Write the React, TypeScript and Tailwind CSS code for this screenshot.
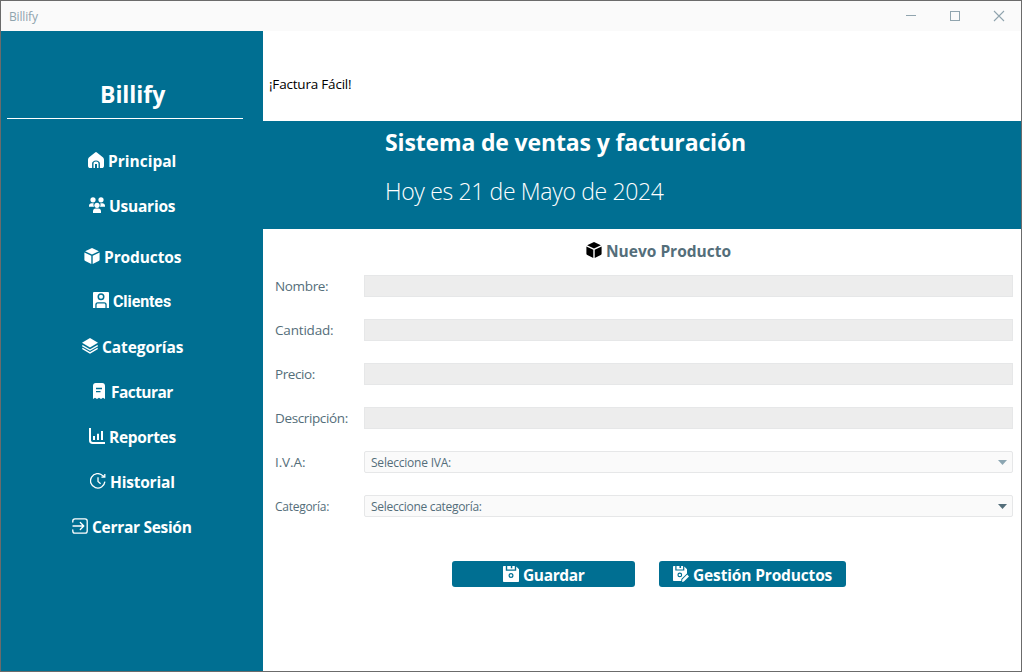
import React from 'react';

type IconProps = { className?: string };

function Svg({ className = '', children }: IconProps & { children: React.ReactNode }) {
  return (
    <svg width="16" height="16" viewBox="0 0 16 16" fill="none" className={`shrink-0 ${className}`}>
      {children}
    </svg>
  );
}

const HomeIcon = () => (
  <Svg>
    <path
      fill="currentColor"
      d="M7.1.4a1.5 1.5 0 0 1 1.8 0l5.6 4.7c.9.7 1.5 1.8 1.5 3v5.6c0 1.5-.9 2.3-2.2 2.3h-1.900v-4.5C11.900 9.700 10.300 8.400 8 8.400s-3.900 1.300-3.900 3.100V16H2.200C.9 16 0 15.200 0 13.700V8.100c0-1.200.6-2.300 1.500-3z"
    />
    <path fill="currentColor" d="M5.500 16v-4.200c0-1.300 1-2.200 2.500-2.200s2.500.9 2.500 2.200V16H9v-4H7v4z" />
  </Svg>
);

const UsersIcon = () => (
  <Svg>
    <g fill="currentColor">
      <circle cx="4" cy="2.800" r="2.600" />
      <circle cx="12" cy="2.800" r="2.600" />
      <circle cx="8" cy="8.300" r="2.600" />
      <path d="M2.600 6.200h2.100a4 4 0 0 0 .3 3.500H0v-1c0-1.400 1.100-2.500 2.600-2.500zM11.300 6.200h2.100c1.500 0 2.600 1.100 2.600 2.500v1h-5a4 4 0 0 0 .3-3.500zM6.500 11.500h3c1.500 0 2.500 1.200 2.500 2.700V16H4v-1.800c0-1.500 1-2.700 2.500-2.700z" />
    </g>
  </Svg>
);

const BoxIcon = ({ className }: IconProps) => (
  <Svg className={className}>
    <path
      fill="currentColor"
      d="M8 0l6.900 3.300L8 6.500 1.100 3.300zM.4 4.600l6.900 3.200V16L1.300 13C.7 12.700.4 12.300.4 11.700zM15.600 4.600v7.100c0 .6-.3 1-.9 1.300l-6 3V7.800z"
    />
  </Svg>
);

const ClientIcon = () => (
  <Svg>
    <path
      fill="currentColor"
      fillRule="evenodd"
      d="M1 0h14a1 1 0 0 1 1 1v15h-2.300v-3.300c0-1.500-.9-2.500-2.400-2.500H4.700c-1.500 0-2.400 1-2.400 2.500V16H0V1a1 1 0 0 1 1-1zM8 1.200a3.500 3.500 0 1 0 0 7 3.500 3.500 0 0 0 0-7z"
    />
    <circle cx="8" cy="4.700" r="2" fill="currentColor" />
    <path fill="currentColor" d="M5 11.400h6c.9 0 1.400.6 1.400 1.500V16H3.600v-3.100c0-.9.5-1.500 1.400-1.500z" />
  </Svg>
);

const LayersIcon = () => (
  <Svg>
    <path fill="currentColor" d="M8 0l8 4.700-8 4.800-8-4.800z" />
    <path d="M.3 7.600L8 12.100l7.700-4.500M.3 10.400L8 14.900l7.700-4.500" stroke="currentColor" strokeWidth="1.300" />
  </Svg>
);

const ReceiptIcon = () => (
  <Svg>
    <path fill="currentColor" d="M4.800 0h6.400C13 0 14 1.200 14 2.800V16l-2-1.300L10 16l-2-1.300L6 16l-2-1.300L2 16V2.800C2 1.200 3 0 4.800 0z" />
    <path d="M5 5.500h6M5 8.700h4.500" stroke="#006f92" strokeWidth="1.300" />
  </Svg>
);

const ChartIcon = () => (
  <Svg>
    <path
      d="M1 0v12.200C1 14 2 15 3.700 15H16M5 8v4M9 5.800V12M13 3v9"
      stroke="currentColor"
      strokeWidth="2"
    />
  </Svg>
);

const HistoryIcon = () => (
  <Svg>
    <path
      d="M14.900 8.700A7.200 7.200 0 1 1 12.700 2.600L14.500 4M14.800 1v3.200h-3.400M8 4.300v4.200l2.600 2.300"
      stroke="currentColor"
      strokeWidth="1.300"
    />
  </Svg>
);

const LogoutIcon = () => (
  <Svg>
    <path
      d="M.8 4V3C.8 1.600 1.600.8 3 .8h10c1.400 0 2.200.8 2.200 2.200v10c0 1.400-.8 2.200-2.200 2.200H3C1.600 15.200.8 14.400.8 13v-1M1 8h10.500M8.300 4.500L11.800 8l-3.500 3.500"
      stroke="currentColor"
      strokeWidth="1.300"
      strokeLinecap="round"
      strokeLinejoin="round"
    />
  </Svg>
);

const SaveIcon = () => (
  <Svg>
    <path
      fill="currentColor"
      fillRule="evenodd"
      d="M.8 0h2v4.700h10.400V.6L16 3.300V15.200a.8.800 0 0 1-.8.800H.8a.8.800 0 0 1-.8-.8V.8A.8.800 0 0 1 .8 0zM8 7a2.500 2.500 0 1 0 0 5 2.500 2.500 0 0 0 0-5z"
    />
    <path fill="currentColor" d="M4.200 0h3.600v2.300h1.500V0h2.500v3.500H4.200z" />
    <circle cx="8" cy="9.500" r="1.200" fill="currentColor" />
  </Svg>
);

const SaveEditIcon = () => (
  <Svg>
    <path
      fill="currentColor"
      fillRule="evenodd"
      d="M.8 0h1.500v4.500h9V.4L14 3.200v4.200l-5.700 5.700V15H.8a.8.800 0 0 1-.8-.8V.8A.8.800 0 0 1 .8 0zM6.800 6.500a2.400 2.400 0 1 0 0 4.800 2.400 2.400 0 0 0 0-4.800z"
    />
    <path fill="currentColor" d="M3.500 0h3v2h1.600V0h2v3.400H3.500zM9.300 13.500l4.900-4.900 1.800 1.800L10.900 15.600l-1.800.4z" />
    <circle cx="6.800" cy="8.900" r="1.200" fill="currentColor" />
  </Svg>
);

const menu = [
  { label: 'Principal', Icon: HomeIcon, row: 'mt-8 pl-[87px]', text: 'ml-1' },
  { label: 'Usuarios', Icon: UsersIcon, row: 'mt-[25px] pl-[88px]', text: 'ml-1 tracking-[-0.22px]' },
  { label: 'Productos', Icon: BoxIcon, row: 'mt-[31px] pl-[83px]', text: 'ml-1 tracking-[-0.1px]' },
  { label: 'Clientes', Icon: ClientIcon, row: 'mt-6 pl-[92px]', text: "mt-px ml-1 font-['Roboto'] text-[16px] tracking-[-0.1px]" },
  { label: 'Categorías', Icon: LayersIcon, row: 'mt-[26px] pl-[81px]', text: 'ml-1 tracking-[-0.1px]' },
  { label: 'Facturar', Icon: ReceiptIcon, row: 'mt-[25px] pl-[90px]', text: 'ml-1 tracking-[-0.55px]' },
  { label: 'Reportes', Icon: ChartIcon, row: 'mt-[25px] pl-[88px]', text: 'ml-1 tracking-[-0.33px]' },
  { label: 'Historial', Icon: HistoryIcon, row: 'mt-[25px] pl-[89px]', text: 'ml-1 tracking-[-0.2px]' },
  { label: 'Cerrar Sesión', Icon: LogoutIcon, row: 'mt-[25px] pl-[71px]', text: 'ml-1 tracking-[-0.3px]' },
];

const fields = [
  { label: 'Nombre:', text: 'text-[13.5px] tracking-[-0.35px]' },
  { label: 'Cantidad:', text: 'text-[13.5px] tracking-[-0.18px]' },
  { label: 'Precio:', text: 'text-[13.5px] tracking-[-0.4px]' },
  { label: 'Descripción:', text: 'text-[13.5px] tracking-[-0.37px]' },
];

const selects = [
  { label: 'I.V.A:', text: 'text-[13.5px] tracking-[-0.1px]', value: 'Seleccione IVA:', valueText: 'tracking-[-0.22px]', arrow: 'text-[#8ca6b2]' },
  { label: 'Categoría:', text: 'mt-0.5 text-[12px] tracking-[-0.27px]', value: 'Seleccione categoría:', valueText: 'tracking-[-0.3px]', arrow: 'text-[#546e7a]' },
];

function TitleBar() {
  return (
    <header className="flex h-[30px] items-center justify-between bg-[#fafafa] pr-4 pl-2 text-[#90a4ae]">
      <span className="mt-px text-[12px] leading-5 tracking-[-0.15px]">Billify</span>
      <div className="flex gap-[32px]">
        <svg width="12" height="12" viewBox="0 0 12 12" fill="none" stroke="currentColor" shapeRendering="crispEdges">
          <path d="M1 5.500h10" />
        </svg>
        <svg width="12" height="12" viewBox="0 0 12 12" fill="none" stroke="currentColor" shapeRendering="crispEdges">
          <path d="M1.500 1.500h9v9h-9z" />
        </svg>
        <svg width="12" height="12" viewBox="0 0 12 12" fill="none" stroke="currentColor" strokeWidth="1.100">
          <path d="M1 1l10 10M11 1L1 11" />
        </svg>
      </div>
    </header>
  );
}

function Sidebar() {
  return (
    <aside className="w-[262px] shrink-0 bg-[#006f92] text-white">
      <h1 className="ml-[99px] pt-[47px] text-[23px] leading-8 font-bold tracking-[-0.05px]">Billify</h1>
      <div className="mt-2 ml-1.5 h-px w-[236px] bg-white" />
      <nav>
        {menu.map(({ label, Icon, row, text }) => (
          <a key={label} className={`flex h-5 items-start ${row}`}>
            <span className="mt-px">
              <Icon />
            </span>
            <span className={`text-[15.5px] leading-5 font-bold whitespace-nowrap ${text}`}>{label}</span>
          </a>
        ))}
      </nav>
    </aside>
  );
}

function ProductForm() {
  return (
    <section className="flex flex-col pr-2 pl-3 text-[#546e7a]">
      <h3 className="mt-3 ml-[311px] flex h-5 items-start gap-1">
        <BoxIcon className="mt-px text-black" />
        <span className="text-[15.5px] leading-[21px] font-bold">Nuevo Producto</span>
      </h3>
      <div className="mt-[14px] flex flex-col gap-[22px]">
        {fields.map(({ label, text }) => (
          <label key={label} className="flex h-[22px] items-center">
            <span className={`w-[89px] shrink-0 leading-5 ${text}`}>{label}</span>
            <input disabled className="h-[22px] min-w-0 flex-1 border border-[#e6e7e8] bg-[#ededed]" />
          </label>
        ))}
        {selects.map(({ label, text, value, valueText, arrow }) => (
          <div key={label} className="flex h-[22px] items-center">
            <span className={`w-[89px] shrink-0 leading-5 ${text}`}>{label}</span>
            <div className="flex h-[22px] flex-1 items-center justify-between rounded-[2px] border border-[#e6e7e8] bg-[#fafafa] pr-[5px] pl-1.5">
              <span className={`mt-0.5 text-[12px] leading-5 ${valueText}`}>{value}</span>
              <svg width="9" height="5" viewBox="0 0 9 5" className={arrow}>
                <path d="M0 0h9L4.500 5z" fill="currentColor" />
              </svg>
            </div>
          </div>
        ))}
      </div>
      <div className="mt-11 ml-[177px] flex gap-6 text-white">
        <button className="flex h-[26px] w-[183px] items-start rounded-[3px] bg-[#006f92] pt-[5px] pl-[51px]">
          <SaveIcon />
          <span className="-mt-px ml-1 text-[15.5px] leading-5 font-bold tracking-[-0.38px]">Guardar</span>
        </button>
        <button className="flex h-[26px] w-[187px] items-start rounded-[3px] bg-[#006f92] pt-[5px] pl-[14px]">
          <SaveEditIcon />
          <span className="-mt-px ml-1 text-[15.5px] leading-5 font-bold tracking-[-0.15px] whitespace-nowrap">Gestión Productos</span>
        </button>
      </div>
    </section>
  );
}

export default function App() {
  return (
    <div className="flex h-[672px] w-[1022px] flex-col overflow-hidden border border-[#6b6b6b] bg-white font-['Open_Sans',sans-serif]">
      <TitleBar />
      <div className="flex min-h-0 flex-1">
        <Sidebar />
        <main className="min-w-0 flex-1">
          <div className="h-[90px] pt-[43px] pl-1.5">
            <p className="text-[13.5px] leading-5 tracking-[-0.2px] text-black">¡Factura Fácil!</p>
          </div>
          <div className="h-[108px] bg-[#006f92] pl-[122px] text-white">
            <h2 className="pt-[5px] text-[23px] leading-8 font-bold tracking-[-0.15px]">Sistema de ventas y facturación</h2>
            <p className="mt-[17px] text-[23px] leading-8 font-light tracking-[-0.35px]">Hoy es 21 de Mayo de 2024</p>
          </div>
          <ProductForm />
        </main>
      </div>
    </div>
  );
}
